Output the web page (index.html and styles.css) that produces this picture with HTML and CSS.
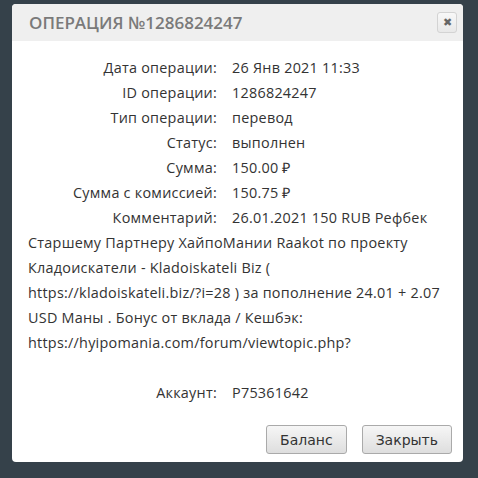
FILE: index.html
```html
<!DOCTYPE html>
<html lang="ru">
<head>
    <meta charset="UTF-8">
    <title>Операция №1286824247</title>
    <link rel="stylesheet" href="styles.css">
</head>
<body>
    <div class="dialog">
        <div class="dialog-header">
            <h2>Операция №1286824247</h2>
            <button class="close-btn" title="Закрыть">&#10006;</button>
        </div>
        <div class="dialog-body">
            <div class="row"><span class="label">Дата операции:</span>26 Янв 2021 11:33</div>
            <div class="row"><span class="label">ID операции:</span>1286824247</div>
            <div class="row"><span class="label">Тип операции:</span>перевод</div>
            <div class="row"><span class="label">Статус:</span>выполнен</div>
            <div class="row"><span class="label">Сумма:</span>150.00 &#8381;</div>
            <div class="row"><span class="label">Сумма с комиссией:</span>150.75 &#8381;</div>
            <div class="row"><span class="label">Комментарий:</span>26.01.2021 150 RUB Рефбек Старшему Партнеру ХайпоМании Raakot по проекту Кладоискатели - Kladoiskateli Biz ( <span class="url">https://kladoiskateli.biz/?i=28</span> ) за пополнение 24.01 + 2.07 USD Маны . Бонус от вклада / Кешбэк: <span class="url">https://hyipomania.com/forum/viewtopic.php?</span></div>
            <div class="row gap"><span class="label">Аккаунт:</span>P75361642</div>
        </div>
        <div class="dialog-footer">
            <button class="btn">Баланс</button>
            <button class="btn">Закрыть</button>
        </div>
    </div>
</body>
</html>
```

FILE: styles.css
```css
body {
    margin: 0;
    padding: 4px 15px 15px 12px;
    background-color: #35414a;
    font-family: 'Open Sans', Arial, sans-serif;
    color: #333;
}

.dialog {
    background-color: #fff;
    border-radius: 4px;
    overflow: hidden;
}

.dialog-header {
    display: flex;
    justify-content: space-between;
    align-items: center;
    height: 37px;
    padding: 0 6px 0 17px;
    background-color: #efefef;
}

.dialog-header h2 {
    margin: 0;
    font-size: 17px;
    font-weight: 600;
    letter-spacing: 0;
    text-transform: uppercase;
    color: #7a7a7a;
}

.close-btn {
    width: 20px;
    height: 21px;
    padding: 0;
    border: 1px solid #d3d3d3;
    border-radius: 3px;
    background: linear-gradient(#f8f8f8, #e8e8e8);
    color: #666;
    font-size: 11px;
    line-height: 19px;
    cursor: pointer;
}

.dialog-body {
    padding: 14px 16px 0 16px;
    font-size: 14.4px;
    letter-spacing: 0.25px;
    line-height: 25px;
}

.row .label {
    display: inline-block;
    width: 189px;
    margin-right: 15px;
    text-align: right;
}

.row .url {
    white-space: nowrap;
}

.row.gap {
    margin-top: 25px;
}

.dialog-footer {
    display: flex;
    justify-content: flex-end;
    gap: 15px;
    padding: 20px 11px 8px 0;
}

.btn {
    height: 29px;
    padding: 0 13px;
    border: 1px solid #aaa;
    border-radius: 3px;
    background: linear-gradient(#f6f6f6, #dedede);
    font-family: 'DejaVu Sans', Verdana, sans-serif;
    font-size: 14px;
    color: #333;
    cursor: pointer;
}
```
